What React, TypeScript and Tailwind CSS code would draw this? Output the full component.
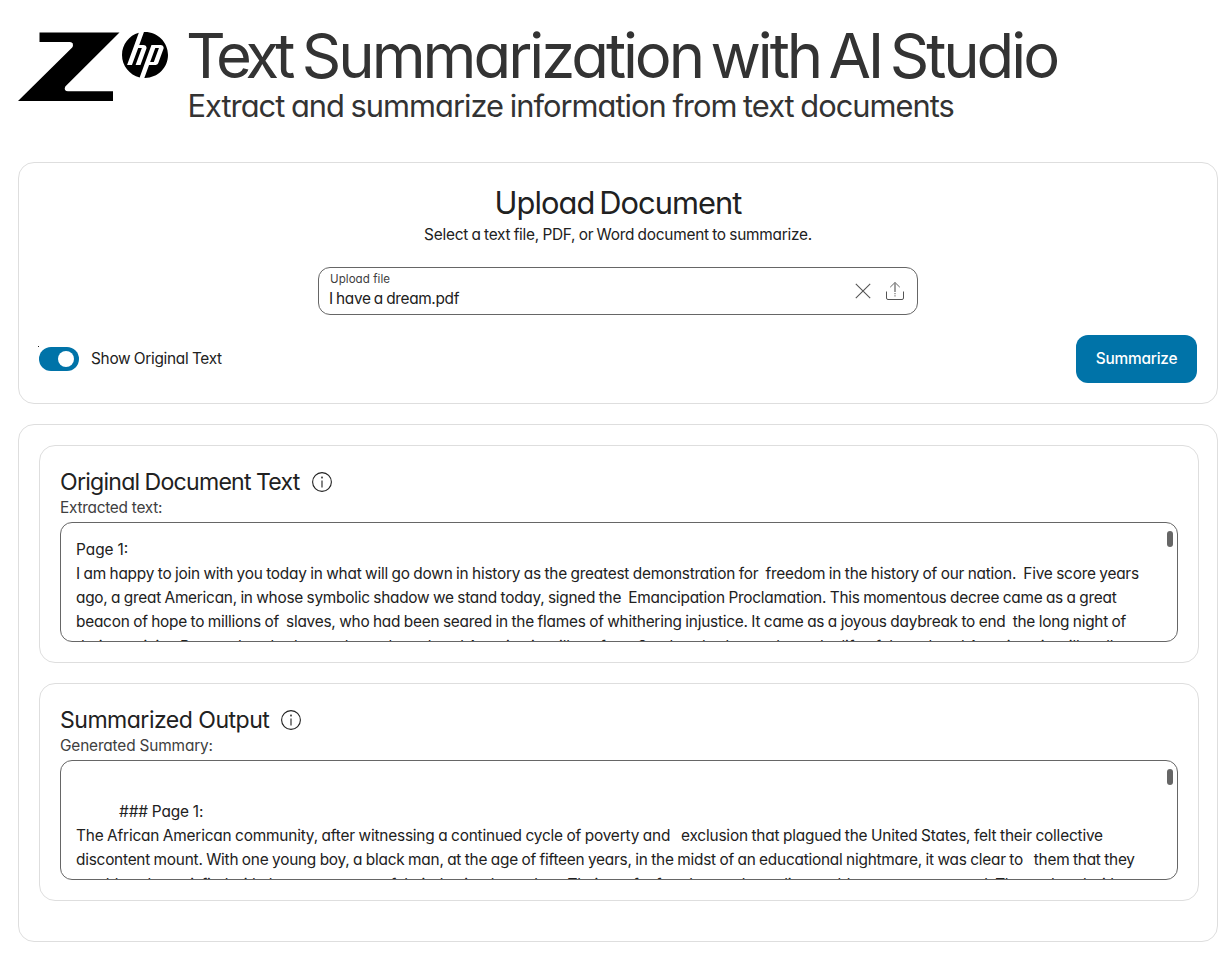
import { useState, type ReactNode } from 'react';
import { SiHp } from 'react-icons/si';

function ZLogo() {
  return (
    <svg width="102" height="70" viewBox="18 32 102 70" className="shrink-0" aria-hidden="true">
      <path
        fill="#000"
        d="M39.5 32.5H119.5L65.3 86.4Q64.3 88 65 90Q66 91.3 68 91.3H113V101H18L72.2 47.4Q73.4 46 72.8 43.6Q72 42 70 42H39.5Z"
      />
    </svg>
  );
}

function InfoIcon() {
  return (
    <svg width="20" height="20" viewBox="0 0 20 20" fill="none" aria-hidden="true">
      <circle cx="10" cy="10" r="9.4" stroke="#212121" strokeWidth="1.1" />
      <path d="M10 8.5V15.5" stroke="#666" strokeWidth="1.6" />
      <rect x="9.1" y="4.6" width="1.8" height="1.8" fill="#444" />
    </svg>
  );
}

function CloseIcon() {
  return (
    <svg width="16" height="16" viewBox="0 0 16 16" fill="none" stroke="#555" strokeWidth="1.1" aria-hidden="true">
      <path d="M0.8 0.8L15.2 15.2M15.2 0.8L0.8 15.2" />
    </svg>
  );
}

function UploadIcon() {
  return (
    <svg width="18" height="18" viewBox="0 0 18 18" fill="none" stroke="#666" aria-hidden="true">
      <path d="M0.5 9.5V16Q0.5 17.5 2 17.5H16Q17.5 17.5 17.5 16V9.5" stroke="#555" />
      <path d="M4.2 5.2L9 0.5L13.8 5.2" />
      <path d="M9 0.6V10" stroke="#888" strokeWidth="1.6" />
      <path d="M9 11V15.5" stroke="#999" strokeWidth="1.6" strokeDasharray="1.3 1" />
    </svg>
  );
}

function TextPanel({ heading, headingClass, label, labelClass, children }: {
  heading: string;
  headingClass: string;
  label: string;
  labelClass: string;
  children: ReactNode;
}) {
  return (
    <section className="w-[1160px] rounded-2xl border border-[#dedede] p-5">
      <div className="flex h-8 items-center gap-3">
        <h3 className={`whitespace-nowrap text-[23.1px] leading-8 ${headingClass}`}>{heading}</h3>
        <InfoIcon />
      </div>
      <p className={`text-[15.4px] leading-5 text-[#404040] ${labelClass}`}>{label}</p>
      <div className="relative mt-1 h-[120px] overflow-hidden rounded-xl border border-[#666] p-[15px] text-[15.4px] leading-6">
        {children}
        <div className="absolute right-1 top-2 h-4 w-1.5 rounded-full bg-[#666]" />
      </div>
    </section>
  );
}

export default function App() {
  const [on, setOn] = useState(true);
  return (
    <div className="h-[955px] w-[1230px] overflow-hidden bg-white pl-[18px] font-['Inter','Liberation_Sans',sans-serif] text-[#212121] [font-feature-settings:'cv11']">
      <header className="flex h-[162px] items-start pt-6">
        <div className="flex w-[168px] items-start gap-[2px] pt-2">
          <ZLogo />
          <SiHp className="size-[46px] shrink-0 text-black" />
        </div>
        <div className="whitespace-nowrap text-[#333]">
          <h1 className="text-[61.6px] leading-[64px] tracking-[-3.04px] [word-spacing:-6px]">
            <span className="tracking-[-5px]">Text</span>
            <span className="tracking-normal"> </span>
            Summarization with AI Studio
          </h1>
          <p className="-mt-0.5 pl-[1.5px] text-[30.8px] leading-10 tracking-[-0.98px] [word-spacing:-1px]">Extract and summarize information from text documents</p>
        </div>
      </header>

      <section className="flex h-[242px] w-[1200px] flex-col items-center rounded-2xl border border-[#dedede] p-5">
        <h2 className="text-[30.8px] leading-10 tracking-[-0.93px] [word-spacing:-3px]">Upload Document</h2>
        <p className="text-[15.4px] leading-6 tracking-[-0.24px] [word-spacing:-0.7px]">Select a text file, PDF, or Word document to summarize.</p>
        <div className="mt-5 flex h-12 w-[600px] shrink-0 items-center justify-between rounded-xl border border-[#666] pl-[11px] pr-[13px]">
          <div className="flex flex-col">
            <span className="text-[11.55px] leading-4 tracking-[0.06px] text-[#404040]">Upload file</span>
            <span className="-ml-px text-[15.4px] leading-6 tracking-[-0.34px] [word-spacing:-0.7px]">I have a dream.pdf</span>
          </div>
          <div className="flex items-center gap-[15px]">
            <CloseIcon />
            <UploadIcon />
          </div>
        </div>
        <div className="mt-5 flex w-full items-center justify-between">
          <div className="relative flex items-center gap-3">
            <div className="absolute -left-px -top-px size-px bg-[#222]" />
            <button
              role="switch"
              aria-checked={on}
              onClick={() => setOn(!on)}
              className="flex h-6 w-10 items-center justify-end rounded-full bg-[#0073a8] pr-[5px]"
            >
              <span className="size-4 rounded-full bg-white" />
            </button>
            <span className="text-[15.4px] leading-6 tracking-[-0.3px] [word-spacing:-0.5px]">Show Original Text</span>
          </div>
          <button className="h-12 w-[121px] rounded-xl bg-[#0073a8] text-[15.4px] font-medium tracking-[-0.2px] text-white">Summarize</button>
        </div>
      </section>

      <section className="mt-5 flex h-[518px] w-[1200px] flex-col gap-5 rounded-2xl border border-[#dedede] p-5">
        <TextPanel heading="Original Document Text" headingClass="tracking-[-0.76px] [word-spacing:-0.5px]" label="Extracted text:" labelClass="tracking-[-0.26px]">
          <div className="whitespace-pre [word-spacing:-0.5px]">
            <p>Page 1:</p>
            <p className="tracking-[-0.228px]">I am happy to join with you today in what will go down in history as the greatest demonstration for  freedom in the history of our nation.  Five score years</p>
            <p className="tracking-[-0.255px]">ago, a great American, in whose symbolic shadow we stand today, signed the  Emancipation Proclamation. This momentous decree came as a great</p>
            <p className="tracking-[-0.233px]">beacon of hope to millions of  slaves, who had been seared in the flames of whithering injustice. It came as a joyous daybreak to end  the long night of</p>
            <p className="pt-px tracking-[-0.16px]">their captivity. But one hundred years later, the colored America is still not free. One hundred years later, the life of the colored American is still sadly</p>
          </div>
        </TextPanel>
        <TextPanel heading="Summarized Output" headingClass="tracking-[-0.54px]" label="Generated Summary:" labelClass="tracking-[-0.15px]">
          <div className="whitespace-pre pt-6 [word-spacing:-0.5px]">
            <p className="indent-[43px] tracking-[-0.08px]">### Page 1:</p>
            <p className="tracking-[-0.187px]">The African American community, after witnessing a continued cycle of poverty and   exclusion that plagued the United States, felt their collective</p>
            <p className="tracking-[-0.235px]">discontent mount. With one young boy, a black man, at the age of fifteen years, in the midst of an educational nightmare, it was clear to   them that they</p>
            <p className="pt-px tracking-[-0.33px]">would not be satisfied with the current state of their destined mandate. Their cry for freedom and equality would not go unanswered. They echoed with</p>
          </div>
        </TextPanel>
      </section>
    </div>
  );
}
